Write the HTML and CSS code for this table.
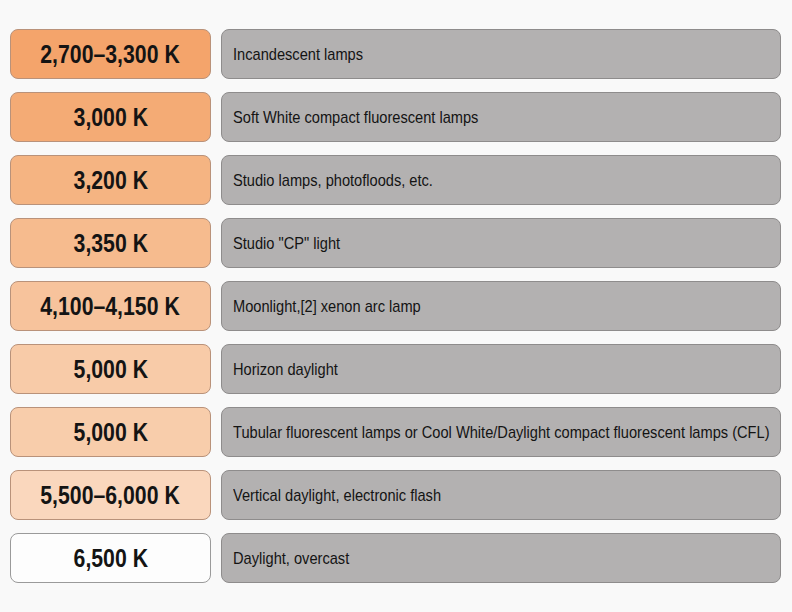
FILE: index.html
```html
<!DOCTYPE html>
<html>
<head>
<meta charset="utf-8">
<link rel="stylesheet" href="styles.css">
</head>
<body>
<div class="table">
  <div class="row"><div class="temp t1"><span>2,700–3,300 K</span></div><div class="desc"><span>Incandescent lamps</span></div></div>
  <div class="row"><div class="temp t2"><span>3,000 K</span></div><div class="desc"><span>Soft White compact fluorescent lamps</span></div></div>
  <div class="row"><div class="temp t3"><span>3,200 K</span></div><div class="desc"><span>Studio lamps, photofloods, etc.</span></div></div>
  <div class="row"><div class="temp t4"><span>3,350 K</span></div><div class="desc"><span>Studio "CP" light</span></div></div>
  <div class="row"><div class="temp t5"><span>4,100–4,150 K</span></div><div class="desc"><span>Moonlight,[2] xenon arc lamp</span></div></div>
  <div class="row"><div class="temp t6"><span>5,000 K</span></div><div class="desc"><span>Horizon daylight</span></div></div>
  <div class="row"><div class="temp t7"><span>5,000 K</span></div><div class="desc"><span>Tubular fluorescent lamps or Cool White/Daylight compact fluorescent lamps (CFL)</span></div></div>
  <div class="row"><div class="temp t8"><span>5,500–6,000 K</span></div><div class="desc"><span>Vertical daylight, electronic flash</span></div></div>
  <div class="row"><div class="temp t9"><span>6,500 K</span></div><div class="desc"><span>Daylight, overcast</span></div></div>
</div>
</body>
</html>
```
FILE: styles.css
```css
html, body {
  margin: 0;
  padding: 0;
  background: #f9f9f9;
}
body {
  width: 792px;
  height: 612px;
  overflow: hidden;
  font-family: "Liberation Sans", Arial, sans-serif;
  color: #141414;
}
.table {
  display: flex;
  flex-direction: column;
  gap: 13px;
  padding: 29px 0 0 10px;
}
.row {
  display: flex;
  gap: 10px;
  height: 50px;
}
.temp {
  box-sizing: border-box;
  width: 201px;
  height: 50px;
  border: 1px solid #b9927a;
  border-radius: 8px;
  display: flex;
  align-items: center;
  justify-content: center;
  font-weight: bold;
  font-size: 25px;
  overflow: visible;
}
.temp span {
  display: inline-block;
  white-space: nowrap;
  transform: scaleX(0.85);
  transform-origin: center center;
  line-height: 1;
}
.desc {
  box-sizing: border-box;
  width: 560px;
  height: 50px;
  border: 1px solid #8e8c8c;
  border-radius: 8px;
  background: #b3b1b1;
  display: flex;
  align-items: center;
  padding-left: 11px;
  font-size: 17px;
  overflow: hidden;
}
.desc span {
  display: inline-block;
  white-space: nowrap;
  transform: scaleX(0.86);
  transform-origin: left center;
  line-height: 1;
  flex-shrink: 0;
}
.t1 { background: #f4a46b; }
.t2 { background: #f4ab75; }
.t3 { background: #f5b482; }
.t4 { background: #f6bb8e; }
.t5 { background: #f7c39c; }
.t6 { background: #f8cba8; }
.t7 { background: #f8cdab; }
.t8 { background: #fad7bd; }
.t9 { background: #fdfdfd; border-color: #9a9a9a; }
```
